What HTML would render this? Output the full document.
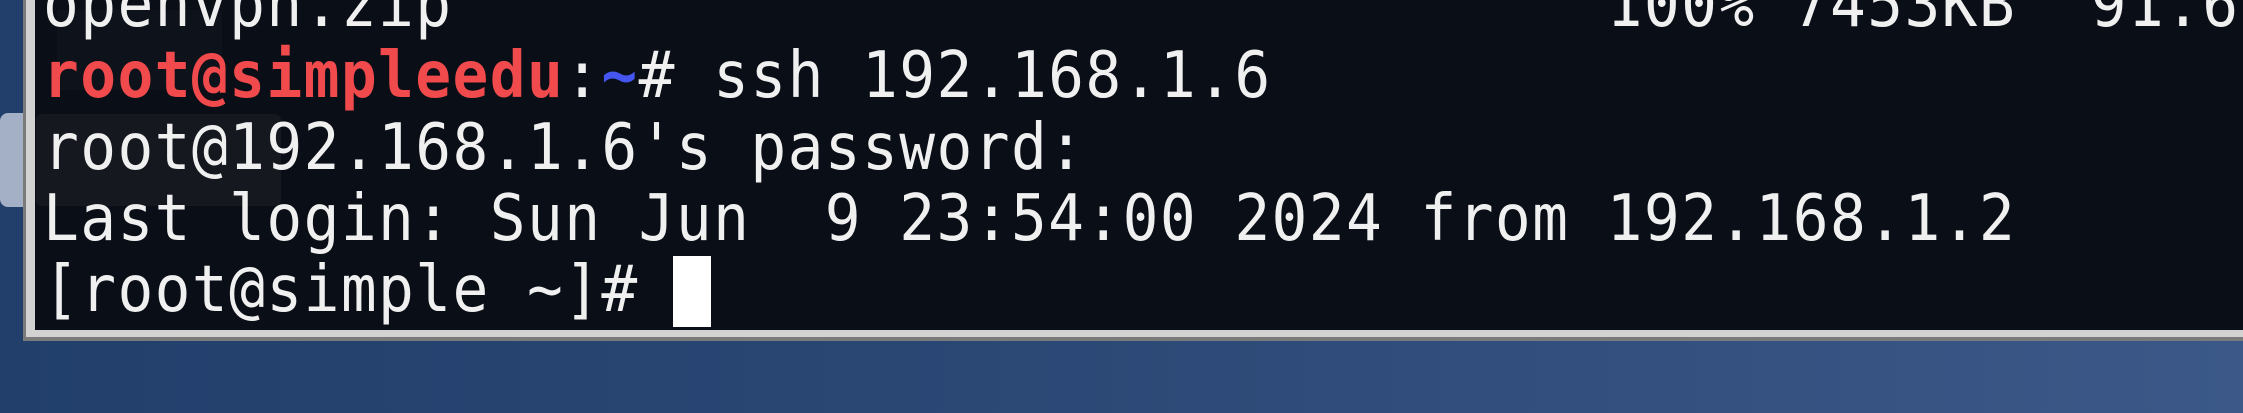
<!DOCTYPE html>
<html><head><meta charset="utf-8"><style>
html,body{margin:0;padding:0;}
body{width:2243px;height:413px;overflow:hidden;position:relative;background:linear-gradient(90deg,#223f6c 0%,#2a4673 40%,#3b5888 100%);}
.term{position:absolute;left:23px;top:-10px;width:2240px;height:351px;background:#7a7a7a;}
.term .l{position:absolute;left:3px;top:0;right:0;bottom:4px;background:#d2d2d2;}
.term .in{position:absolute;left:12px;top:0;right:0;bottom:11px;background:#0a0e16;overflow:hidden;}
.tab{position:absolute;left:0;top:113px;width:24px;height:94px;background:#a3b0c6;border-radius:8px 0 0 8px;}
.shade{position:absolute;left:36px;top:114px;width:245px;height:92px;background:#15181e;border-radius:6px;}
.shade2{position:absolute;left:57px;top:10px;width:165px;height:80px;background:#0e121a;}
pre{position:absolute;left:43px;top:0;margin:0;font-family:"DejaVu Sans Mono","Liberation Mono",monospace;font-size:64px;line-height:71.3px;color:#f0f0f0;letter-spacing:1.5px;transform:scaleX(0.93);transform-origin:0 0;}
.r{color:#f04a4d;font-weight:bold;}
.b{color:#4455f0;font-weight:bold;}
.cur{position:absolute;left:673px;top:256px;width:38px;height:71px;background:#fff;}
</style></head><body>
<div class="tab"></div>
<div class="term"><div class="l"></div><div class="in"></div></div>
<div class="shade2"></div>
<div class="shade"></div>
<pre style="top:-30px">openvpn.zip                               100% 7453KB  91.6
<span class="r">root@simpleedu</span>:<span class="b">~</span># ssh 192.168.1.6
root@192.168.1.6's password:
Last login: Sun Jun  9 23:54:00 2024 from 192.168.1.2
[root@simple ~]# </pre>
<div class="cur"></div>
</body></html>
